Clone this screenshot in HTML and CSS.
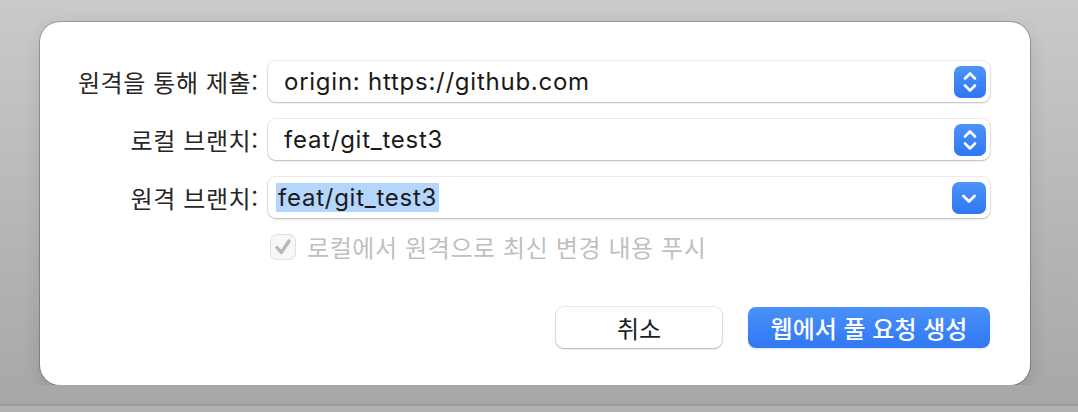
FILE: index.html
```html
<!DOCTYPE html>
<html lang="ko">
<head>
<meta charset="utf-8">
<link rel="stylesheet" href="styles.css">
</head>
<body>
<div class="dialog">
  <div class="form">
    <div class="label">원격을 통해 제출:</div>
    <div class="popup">
      <span class="value">origin: https://github.com</span>
      <span class="btn-blue">
        <svg width="32" height="32" viewBox="0 0 32 32"><path d="M11 12.5 L16 7.5 L21 12.5 M11 19.5 L16 24.5 L21 19.5" fill="none" stroke="#fff" stroke-width="2.6" stroke-linecap="round" stroke-linejoin="round"/></svg>
      </span>
    </div>

    <div class="label">로컬 브랜치:</div>
    <div class="popup">
      <span class="value">feat/git_test3</span>
      <span class="btn-blue">
        <svg width="32" height="32" viewBox="0 0 32 32"><path d="M11 12.5 L16 7.5 L21 12.5 M11 19.5 L16 24.5 L21 19.5" fill="none" stroke="#fff" stroke-width="2.6" stroke-linecap="round" stroke-linejoin="round"/></svg>
      </span>
    </div>

    <div class="label">원격 브랜치:</div>
    <div class="popup combo">
      <span class="value"><span class="sel">feat/git_test3</span></span>
      <span class="btn-blue wide">
        <svg width="34" height="32" viewBox="0 0 34 32"><path d="M11.5 14 L17 19.5 L22.5 14" fill="none" stroke="#fff" stroke-width="2.8" stroke-linecap="round" stroke-linejoin="round"/></svg>
      </span>
    </div>

    <div></div>
    <label class="check">
      <span class="box">
        <svg width="24" height="24" viewBox="0 0 24 24"><path d="M6 12.5 L10.2 17.5 L18 6" fill="none" stroke="#b9b9b9" stroke-width="3.4" stroke-linecap="round" stroke-linejoin="round"/></svg>
      </span>
      <span class="check-text">로컬에서 원격으로 최신 변경 내용 푸시</span>
    </label>
  </div>

  <div class="actions">
    <button class="button cancel">취소</button>
    <button class="button primary">웹에서 풀 요청 생성</button>
  </div>
</div>
</body>
</html>
```

FILE: styles.css
```css
html {
  background:
    linear-gradient(to bottom, transparent 0, transparent 404px, #9c9c9c 404px, #9c9c9c 406px, #b1b1b1 406px, #b1b1b1 412px),
    linear-gradient(to bottom, #cacaca 0%, #b8b8b8 50%, #a6a6a6 100%);
  height: 412px;
  overflow: hidden;
}

body {
  margin: 0;
  font-family: "Noto Sans CJK KR", "Inter", sans-serif;
  color: #262626;
}

.dialog {
  margin: 22px 0 0 40px;
  width: 990px;
  height: 363px;
  box-sizing: border-box;
  background: #fff;
  border-radius: 20px;
  box-shadow: 0 0 0 1px rgba(0,0,0,0.22), 0 6px 18px rgba(0,0,0,0.12);
  padding: 39px 40px 37px 0;
  display: flex;
  flex-direction: column;
}

.form {
  display: grid;
  grid-template-columns: 218px 1fr;
  column-gap: 10px;
  row-gap: 17px;
  align-items: center;
}

.label {
  text-align: right;
  font-size: 24px;
  line-height: 41px;
  color: #262626;
  letter-spacing: 0.6px;
  margin-right: -0.6px;
}

.popup {
  height: 41px;
  box-sizing: border-box;
  background: #fff;
  border-radius: 8px;
  box-shadow: 0 0 0 1px rgba(0,0,0,0.07), 0 1px 2px rgba(0,0,0,0.22);
  display: flex;
  align-items: center;
  justify-content: space-between;
  padding: 0 4px 0 16px;
}

.popup.combo {
  padding-left: 8px;
}

.value {
  font-family: "Inter", "Noto Sans CJK KR", sans-serif;
  font-size: 24px;
  color: #1a1a1a;
  letter-spacing: 0.75px;
  line-height: 29px;
}

.sel {
  display: inline-block;
  background: #b4d6fd;
  padding: 0 2px;
}

.btn-blue {
  width: 32px;
  height: 32px;
  border-radius: 7px;
  background: linear-gradient(to bottom, #4d93f8, #2e77f4);
  display: flex;
  align-items: center;
  justify-content: center;
}

.btn-blue.wide {
  width: 34px;
}

.check {
  margin-top: -3px;
  display: flex;
  align-items: center;
  gap: 12px;
  padding-left: 3px;
  line-height: 30px;
}

.box {
  width: 24px;
  height: 24px;
  border-radius: 6px;
  background: #f7f7f7;
  box-shadow: 0 0 0 1px #e0e0e0;
  display: flex;
  align-items: center;
  justify-content: center;
}

.check-text {
  font-size: 24px;
  color: #bfbfbf;
  letter-spacing: 0.6px;
}

.actions {
  margin-top: auto;
  display: flex;
  justify-content: flex-end;
  gap: 26px;
}

.button {
  height: 41px;
  border: none;
  border-radius: 8px;
  font-family: "Noto Sans CJK KR", sans-serif;
  font-size: 24px;
  padding: 0;
}

.cancel {
  width: 166px;
  background: #fff;
  color: #1e1e1e;
  box-shadow: 0 0 0 1px rgba(0,0,0,0.08), 0 1px 2px rgba(0,0,0,0.25);
}

.primary {
  width: 242px;
  background: linear-gradient(to bottom, #4b91f8, #2f78f4);
  color: #fff;
  font-weight: 500;
  box-shadow: 0 1px 2px rgba(0,0,0,0.12);
}
```
